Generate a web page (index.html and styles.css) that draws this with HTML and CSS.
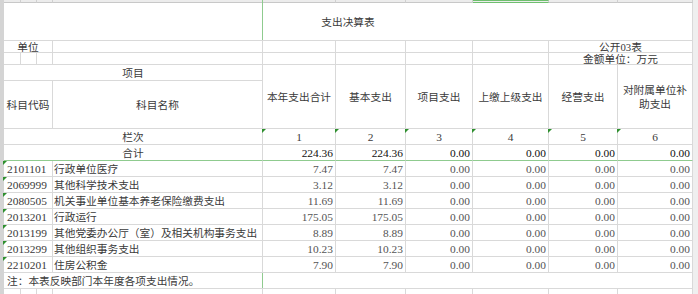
FILE: index.html
```html
<!DOCTYPE html>
<html lang="zh">
<head>
<meta charset="utf-8">
<title>支出决算表</title>
<link rel="stylesheet" href="styles.css">
</head>
<body>
<div class="sheet">
  <div class="rowhdr"></div>
  <div class="scroll"></div>
  <div class="freeze-v"></div>

  <div class="ch"></div><div class="ch"></div><div class="ch"></div><div class="ch"></div><div class="ch"></div>
  <div class="ch"></div><div class="ch"></div><div class="ch sel"></div><div class="ch"></div><div class="ch"></div>

  <div class="c s10 center">支出决算表</div>

  <div class="c s3 center">单位</div><div class="c"></div><div class="c"></div><div class="c"></div><div class="c"></div><div class="c"></div>
  <div class="c s2 center">公开03表</div>

  <div class="c"></div><div class="c"></div><div class="c"></div><div class="c"></div><div class="c"></div><div class="c"></div><div class="c"></div><div class="c"></div>
  <div class="c s2 center">金额单位：万元</div>

  <div class="c s4 center">项目</div>
  <div class="c r2 center">本年支出合计</div>
  <div class="c r2 center">基本支出</div>
  <div class="c r2 center">项目支出</div>
  <div class="c r2 center">上缴上级支出</div>
  <div class="c r2 center">经营支出</div>
  <div class="c r2 center wrap">对附属单位补助支出</div>

  <div class="c s3 center">科目代码</div>
  <div class="c center">科目名称</div>

  <div class="c s4 center">栏次</div>
  <div class="c center dig tri">1</div><div class="c center dig tri">2</div><div class="c center dig tri">3</div>
  <div class="c center dig tri">4</div><div class="c center dig tri">5</div><div class="c center dig tri">6</div>

  <div class="c s4 center tot">合计</div>
  <div class="c num tot">224.36</div><div class="c num tot">224.36</div><div class="c num tot">0.00</div>
  <div class="c num tot">0.00</div><div class="c num tot">0.00</div><div class="c num tot">0.00</div>

  <div class="c s3 code dig tri">2101101</div><div class="c name">行政单位医疗</div>
  <div class="c num">7.47</div><div class="c num">7.47</div><div class="c num">0.00</div><div class="c num">0.00</div><div class="c num">0.00</div><div class="c num">0.00</div>

  <div class="c s3 code dig tri">2069999</div><div class="c name">其他科学技术支出</div>
  <div class="c num">3.12</div><div class="c num">3.12</div><div class="c num">0.00</div><div class="c num">0.00</div><div class="c num">0.00</div><div class="c num">0.00</div>

  <div class="c s3 code dig tri">2080505</div><div class="c name">机关事业单位基本养老保险缴费支出</div>
  <div class="c num">11.69</div><div class="c num">11.69</div><div class="c num">0.00</div><div class="c num">0.00</div><div class="c num">0.00</div><div class="c num">0.00</div>

  <div class="c s3 code dig tri">2013201</div><div class="c name">行政运行</div>
  <div class="c num">175.05</div><div class="c num">175.05</div><div class="c num">0.00</div><div class="c num">0.00</div><div class="c num">0.00</div><div class="c num">0.00</div>

  <div class="c s3 code dig tri">2013199</div><div class="c name">其他党委办公厅（室）及相关机构事务支出</div>
  <div class="c num">8.89</div><div class="c num">8.89</div><div class="c num">0.00</div><div class="c num">0.00</div><div class="c num">0.00</div><div class="c num">0.00</div>

  <div class="c s3 code dig tri">2013299</div><div class="c name">其他组织事务支出</div>
  <div class="c num">10.23</div><div class="c num">10.23</div><div class="c num">0.00</div><div class="c num">0.00</div><div class="c num">0.00</div><div class="c num">0.00</div>

  <div class="c s3 code dig tri">2210201</div><div class="c name">住房公积金</div>
  <div class="c num">7.90</div><div class="c num">7.90</div><div class="c num">0.00</div><div class="c num">0.00</div><div class="c num">0.00</div><div class="c num">0.00</div>

  <div class="c s10 code">注：本表反映部门本年度各项支出情况。</div>

  <div class="c"></div><div class="c"></div><div class="c"></div><div class="c"></div><div class="c"></div>
  <div class="c"></div><div class="c"></div><div class="c"></div><div class="c"></div><div class="c"></div>
</div>
</body>
</html>
```

FILE: styles.css
```css
html, body {
  margin: 0;
  padding: 0;
  background: #ffffff;
  overflow: hidden;
}

.sheet {
  position: relative;
  display: grid;
  grid-template-columns: 4px 17px 16px 16px 210px 73px 70px 67px 76px 69px 75px 5px;
  grid-template-rows: 3px 38px 12px 12px 16px 48px 16px 16px repeat(7, 16px) 16px 16px;
  width: 698px;
  font-family: "Liberation Serif", "Noto Sans CJK SC", serif;
  font-size: 10.7px;
  line-height: 12px;
  color: #3a3a3a;
}

.rowhdr {
  grid-column: 1;
  grid-row: 1 / -1;
  background: #d4d4d4;
}

.scroll {
  grid-column: 12;
  grid-row: 1 / -1;
  background: #efefef;
}

.freeze-v {
  position: absolute;
  left: 262px;
  top: 0;
  width: 1px;
  height: 100%;
  background: #8fcb8f;
}

.ch {
  box-sizing: border-box;
  background: #ececec;
  border-right: 1px solid #d0d0d0;
  border-bottom: 1px solid #c8c8c8;
}

.ch.sel {
  border-top: 1px solid #6fbf6f;
  border-bottom-color: #6fbf6f;
}

.c {
  box-sizing: border-box;
  position: relative;
  display: flex;
  align-items: center;
  border-right: 1px solid #d9d9d9;
  border-bottom: 1px solid #d9d9d9;
  white-space: nowrap;
  min-width: 0;
}

.s2 { grid-column: span 2; }
.s3 { grid-column: span 3; }
.s4 { grid-column: span 4; }
.s10 { grid-column: span 10; }
.r2 { grid-row: span 2; }

.center {
  justify-content: center;
  text-align: center;
}

.wrap {
  white-space: normal;
  padding: 0 3px;
  line-height: 14px;
}

.code {
  padding-left: 3px;
}

.dig,
.num {
  font-size: 11.4px;
}

.name {
  padding-left: 1px;
}

.num {
  justify-content: flex-end;
  padding-right: 2px;
  color: #555555;
}

.tot {
  border-bottom-color: #8fcb8f;
}

.num.tot {
  color: #111111;
}

.tri::before {
  content: "";
  position: absolute;
  left: -1px;
  top: 0;
  width: 0;
  height: 0;
  border-top: 4px solid #2f8f2f;
  border-right: 4px solid transparent;
}
```
